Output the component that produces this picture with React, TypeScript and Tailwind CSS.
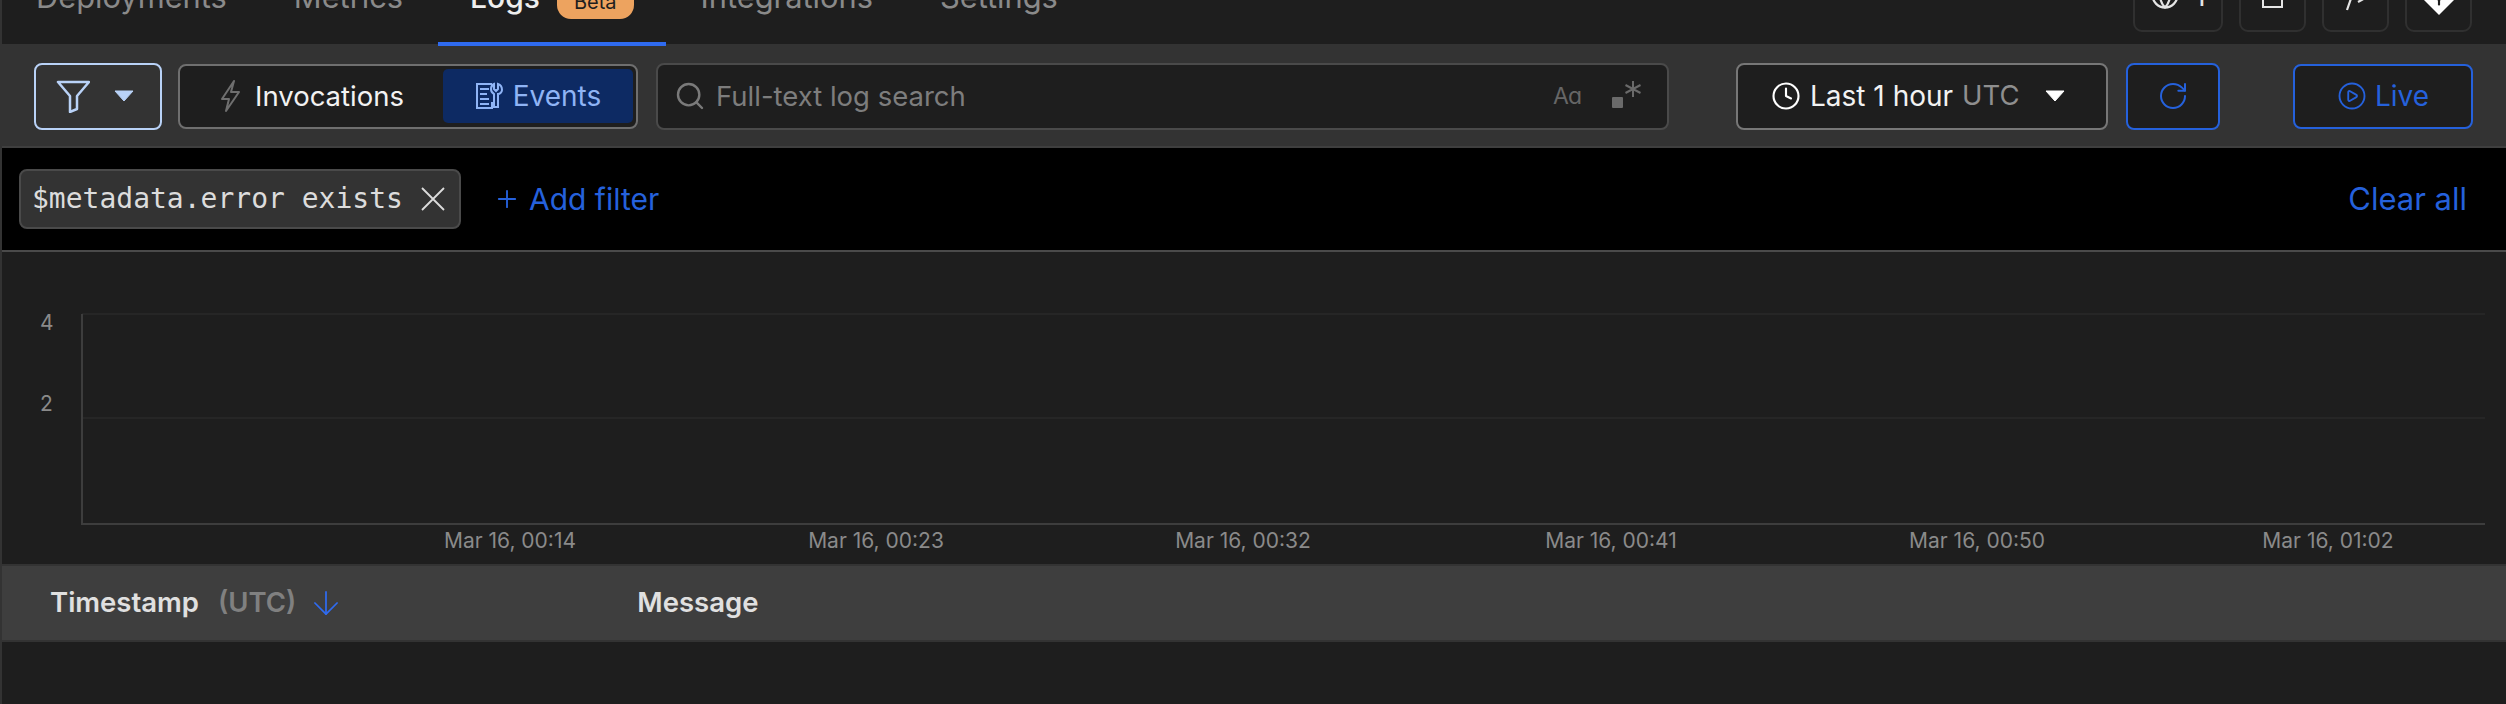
import { ArrowDown, CirclePlay, Clock, Globe, Plus, RotateCw, Search } from 'lucide-react'

const tabs = [
  { label: 'Deployments' },
  { label: 'Metrics' },
  { label: 'Logs', active: true },
  { label: 'Integrations' },
  { label: 'Settings' },
]

const xLabels = [
  { x: 510, label: 'Mar 16, 00:14' },
  { x: 876, label: 'Mar 16, 00:23' },
  { x: 1243, label: 'Mar 16, 00:32' },
  { x: 1611, label: 'Mar 16, 00:41' },
  { x: 1977, label: 'Mar 16, 00:50' },
  { x: 2328, label: 'Mar 16, 01:02' },
]

function Caret({ className }: { className: string }) {
  return (
    <svg width="20" height="12" viewBox="0 0 20 12" className={className}>
      <path d="M1 1h18l-9 10z" fill="currentColor" stroke="currentColor" strokeLinejoin="round" />
    </svg>
  )
}

function FunnelIcon() {
  return (
    <svg width="34" height="34" viewBox="0 0 34 34" fill="none" stroke="currentColor" strokeWidth="2.5" strokeLinejoin="round">
      <path d="M2 3h31L21 17v13l-7 3V17z" />
    </svg>
  )
}

function BoltIcon() {
  return (
    <svg width="20" height="32" viewBox="0 0 20 32" fill="none" stroke="#6f6f6f" strokeWidth="2" strokeLinejoin="round">
      <path d="M13 1 1 19h7l-3 12 13-19h-8z" />
    </svg>
  )
}

function EventsIcon() {
  return (
    <svg width="28" height="28" viewBox="0 0 28 28" fill="none" stroke="currentColor" strokeWidth="2">
      <path d="M17 2H2v24h15v-6" />
      <path d="M5 7h9M5 12h7M5 17h9M5 22h9" />
      <path d="M19 2v5l2 2 2-2V2c3 1 4 3 4 6 0 2-2 4-4 4v13h-4V12c-2-1-3-3-3-5s1-4 3-5z" />
    </svg>
  )
}

function RegexIcon() {
  return (
    <svg width="32" height="32" viewBox="0 0 32 32" fill="#6a6a6a">
      <rect x="1" y="17" width="11" height="11" rx="1" />
      <path d="M22 1v16M14.5 5l15 8M29.5 5l-15 8" stroke="#6a6a6a" strokeWidth="2" />
    </svg>
  )
}

function CloseIcon() {
  return (
    <svg width="24" height="24" viewBox="0 0 24 24" fill="none" stroke="#dcdcdc" strokeWidth="1.8">
      <path d="M1 1l22 22M23 1 1 23" />
    </svg>
  )
}

function TopButtons() {
  return (
    <div className="flex items-end gap-[16px] pb-[14px] pr-[34px] ml-auto">
      <div className="w-[90px] h-[70px] shrink-0 flex items-end justify-center gap-[14px] pb-[20px] border-2 border-[#303030] rounded-[9px] text-[#e5e5e5]">
        <Globe size={30} strokeWidth={1.8} />
        <span className="text-[28px] leading-[28px]">1</span>
      </div>
      <div className="w-[67px] h-[70px] shrink-0 flex items-end justify-center pb-[22px] border-2 border-[#303030] rounded-[9px]">
        <div className="w-[21px] h-[21px] border-2 border-[#e5e5e5]" />
      </div>
      <div className="w-[67px] h-[70px] shrink-0 flex items-end justify-center pb-[18px] border-2 border-[#303030] rounded-[9px]">
        <svg width="26" height="26" viewBox="0 0 26 26" fill="none" stroke="#e5e5e5" strokeWidth="2.2">
          <path d="M11 4 4 24M15 6l9 5-9 5" />
        </svg>
      </div>
      <div className="w-[67px] h-[70px] shrink-0 flex items-end justify-center pb-[15px] border-2 border-[#303030] rounded-[9px]">
        <svg width="30" height="30" viewBox="0 0 28 28">
          <path d="M14 0 28 14 14 28 0 14z" fill="#fff" />
          <circle cx="14" cy="12" r="2.5" fill="#1e1e1e" />
          <path d="M14 12v7" stroke="#1e1e1e" strokeWidth="2" />
        </svg>
      </div>
    </div>
  )
}

export default function App() {
  return (
    <div className="h-[704px] overflow-hidden border-l-2 border-[#333] bg-[#1e1e1e] font-['Inter',sans-serif] text-[28px] text-white flex flex-col">
      {/* Top tabs, cut off by the top of the picture */}
      <div className="h-[46px] shrink-0 flex overflow-hidden pl-[2px] shadow-[inset_0_-2px_0_#333]">
        {tabs.map(t => (
          <div
            key={t.label}
            className={`flex items-end gap-[17px] px-[32px] mr-[3px] pb-[28px] border-b-4 ${
              t.active ? 'border-[#2f6bf0] text-[30px] text-[#eeeeee] font-medium' : 'border-transparent text-[30.8px] text-[#8a8a8a]'
            }`}
          >
            <span className="leading-[34px] whitespace-nowrap">{t.label}</span>
            {t.active && (
              <span className="h-[38px] -mb-[5px] px-[17px] rounded-[14px] bg-[#eda35f] text-[20px] leading-[30px] font-normal text-[#1e1e1e] flex items-end pb-[2px]">
                Beta
              </span>
            )}
          </div>
        ))}
        <TopButtons />
      </div>

      {/* Toolbar */}
      <div className="h-[102px] shrink-0 flex items-center bg-[#333333] border-b-2 border-[#3f3f3f] pl-[32px] pr-[33px]">
        <button className="w-[128px] h-[67px] flex items-center justify-between pl-[20px] pr-[26px] border-2 border-[#b9d2f7] rounded-[8px] text-[#b9d2f7]">
          <FunnelIcon />
          <Caret className="text-[#b9d2f7]" />
        </button>
        <div className="w-[460px] h-[65px] ml-[16px] flex items-center justify-between pl-[41px] pr-[3px] border-2 border-[#6f6f6f] rounded-[8px] bg-[#1e1e1e]">
          <div className="flex items-center gap-[14px] text-[27.5px] text-[#f2f2f2]">
            <BoltIcon />
            <span className="pt-[2px]">Invocations</span>
          </div>
          <div className="w-[190px] h-[54px] flex items-center justify-center gap-[10px] rounded-[5px] bg-[#0d2a63] text-[#8fb4f5]">
            <EventsIcon />
            <span>Events</span>
          </div>
        </div>
        <div className="w-[1013px] h-[67px] ml-[18px] flex items-center pl-[16px] pr-[24px] border-2 border-[#4a4a4a] rounded-[8px] bg-[#1e1e1e]">
          <Search size={32} strokeWidth={1.8} className="text-[#7a7a7a]" />
          <span className="ml-[10px] pt-[2px] text-[27.5px] text-[#7d7d7d]">Full-text log search</span>
          <span className="ml-auto text-[23px] text-[#666666] tracking-[-1px]">Aɑ</span>
          <span className="ml-[30px]"><RegexIcon /></span>
        </div>
        <div className="w-[372px] h-[67px] ml-[67px] flex items-center pl-[33px] border-2 border-[#777777] rounded-[8px] bg-[#1e1e1e]">
          <Clock size={30} strokeWidth={1.7} />
          <span className="ml-[9px] text-[#f2f2f2]">Last 1 hour</span>
          <span className="ml-[9px] text-[27.5px] text-[#8f8f8f]">UTC</span>
          <Caret className="ml-[25px] text-white" />
        </div>
        <button className="w-[94px] h-[67px] ml-[18px] flex items-center justify-center border-2 border-[#2561dc] rounded-[8px] bg-[#1e1e1e] text-[#2561dc]">
          <RotateCw size={32} strokeWidth={1.5} />
        </button>
        <button className="w-[180px] h-[65px] ml-auto flex items-center justify-center gap-[8px] border-2 border-[#2561dc] rounded-[8px] bg-[#1e1e1e] text-[#2561dc]">
          <CirclePlay size={30} strokeWidth={1.5} />
          <span>Live</span>
        </button>
      </div>

      {/* Active filters */}
      <div className="h-[104px] shrink-0 flex items-center bg-black border-b-2 border-[#4a4a4a] pl-[17px] pr-[39px]">
        <div className="w-[442px] h-[60px] flex items-center justify-between pl-[11px] pr-[14px] border-2 border-[#4a4a4a] rounded-[8px] bg-[#333333] font-['DejaVu_Sans_Mono',monospace] text-[#dcdcdc]">
          <span className="text-[28px]">$metadata.error exists</span>
          <CloseIcon />
        </div>
        <div className="ml-[32px] flex items-center gap-[8px] text-[30px] text-[#2561dc]">
          <Plus size={28} strokeWidth={1.6} />
          <span>Add filter</span>
        </div>
        <span className="ml-auto text-[31px] text-[#2561dc]">Clear all</span>
      </div>

      {/* Histogram */}
      <svg width="2504" height="312" viewBox="2 252 2504 312" className="shrink-0 block">
        <path d="M82 314H2485M82 418H2485" stroke="#262626" strokeWidth="2" />
        <path d="M82 314V524H2485" fill="none" stroke="#3d3d3d" strokeWidth="2" />
        <g fill="#8a8a8a" fontSize="21" fontFamily="Inter, sans-serif">
          <text x="40" y="330">4</text>
          <text x="40" y="411">2</text>
          {xLabels.map(l => (
            <text key={l.label} x={l.x} y="548" textAnchor="middle">{l.label}</text>
          ))}
        </g>
      </svg>

      {/* Table header */}
      <div className="h-[78px] shrink-0 flex items-center bg-[#3e3e3e] border-y-2 border-[#333] pl-[48px] text-[27.5px] font-semibold text-[#e0e0e0]">
        <span>Timestamp</span>
        <span className="ml-[19px] text-[#808080]">(UTC)</span>
        <ArrowDown size={38} strokeWidth={1.1} className="ml-[11px] text-[#2f6bf0]" />
        <span className="ml-[292px]">Message</span>
      </div>
    </div>
  )
}
